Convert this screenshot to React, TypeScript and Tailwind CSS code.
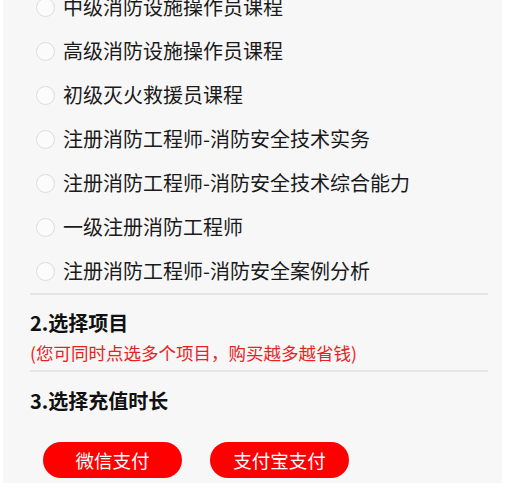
import React from "react";

const items = [
  "中级消防设施操作员课程",
  "高级消防设施操作员课程",
  "初级灭火救援员课程",
  "注册消防工程师-消防安全技术实务",
  "注册消防工程师-消防安全技术综合能力",
  "一级注册消防工程师",
  "注册消防工程师-消防安全案例分析",
];

export default function App() {
  return (
    <div
      className="w-[506px] h-[498px] overflow-hidden bg-white"
      style={{ fontFamily: '"Noto Sans CJK SC", "Noto Sans", sans-serif' }}
    >
      <div className="ml-[3px] mr-[4px] h-full bg-[#f7f7f7] pl-[27px] pr-[14px]">
        <div className="mt-[-15px] flex flex-col">
          {items.map((t) => (
            <div key={t} className="h-[44px] flex items-center">
              <span className="ml-[6px] w-[19px] h-[19px] rounded-full border border-[#dcdcdc] bg-[#fbfbfb]" />
              <span className="ml-[8px] text-[20px] leading-[30px] text-[#1a1a1a]">{t}</span>
            </div>
          ))}
        </div>
        <div className="h-[2px] bg-[#e6e6e6]" />
        <div className="pt-[13px] text-[20px] leading-[30px] font-bold text-[#111]">2.选择项目</div>
        <div className="text-[17.5px] leading-[30px] text-[#e8231e]">(您可同时点选多个项目，购买越多越省钱)</div>
        <div className="mt-[2px] h-[2px] bg-[#e6e6e6]" />
        <div className="pt-[14px] text-[20px] leading-[30px] font-bold text-[#111]">3.选择充值时长</div>
        <div className="mt-[26px] ml-[13px] flex gap-[28px]">
          <button className="w-[139px] h-[36px] rounded-full bg-[#fe0000] text-white text-[18.5px] leading-none flex items-center justify-center">
            微信支付
          </button>
          <button className="w-[139px] h-[36px] rounded-full bg-[#fe0000] text-white text-[18.5px] leading-none flex items-center justify-center">
            支付宝支付
          </button>
        </div>
      </div>
    </div>
  );
}
